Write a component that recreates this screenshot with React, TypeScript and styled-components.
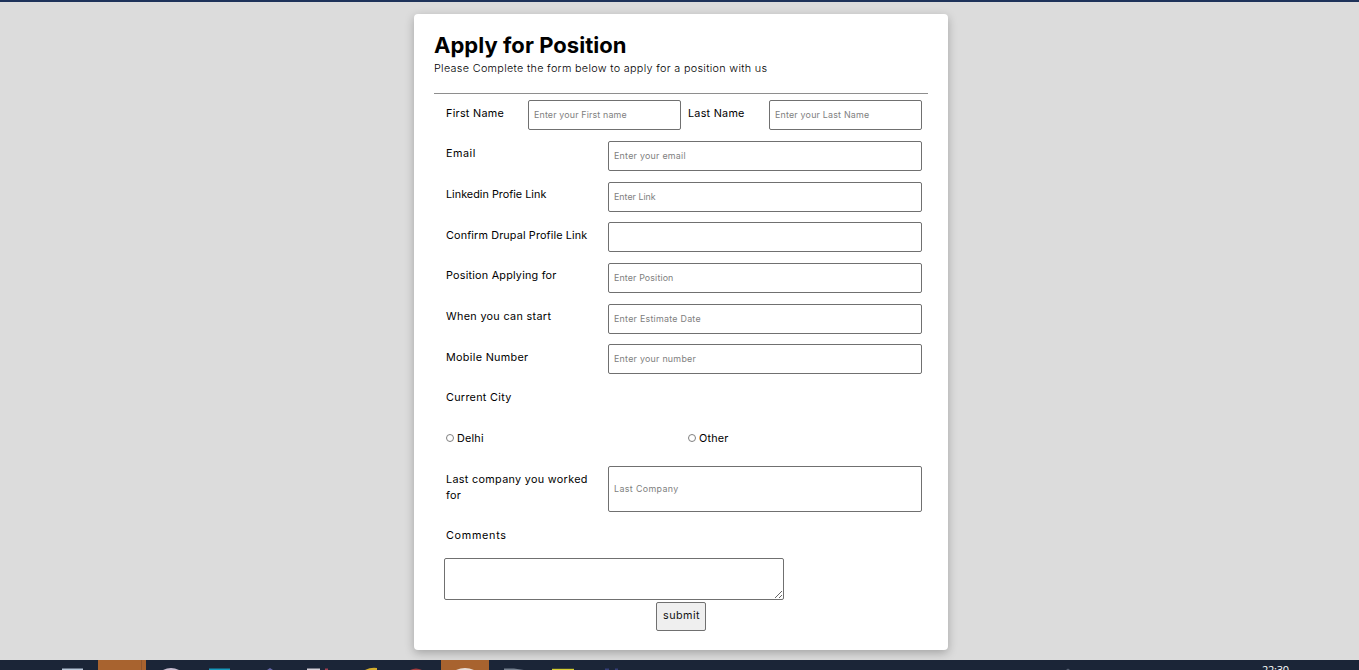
import React from 'react';
import styled, { createGlobalStyle } from 'styled-components';

const GlobalStyle = createGlobalStyle`
  * { box-sizing: border-box; }
  body { margin: 0; overflow: hidden; background: #dcdcdc; font-family: Inter, "Open Sans", sans-serif; }
  input, textarea, button { font-family: inherit; margin: 0; }
`;

const Page = styled.div`
  height: 670px;
  display: flex;
  flex-direction: column;
  align-items: center;
  overflow: hidden;
`;

const TopBar = styled.div`
  width: 100%;
  flex: 0 0 2px;
  background: #1e335a;
`;

const Main = styled.main`
  flex: 1;
  width: 100%;
  min-height: 0;
  padding: 12px 0 10px 414px;
`;

const Card = styled.form`
  width: 534px;
  height: 636px;
  padding: 20px;
  border-radius: 4px;
  background: #fff;
  box-shadow: 0 3px 10px rgba(0, 0, 0, 0.26);
`;

const Header = styled.header`
  height: 60px;
  border-bottom: 1px solid #8e8e8e;
`;

const Title = styled.h1`
  margin: 0;
  font-size: 22px;
  line-height: 22px;
  font-weight: 700;
  letter-spacing: 0.04px;
  white-space: nowrap;
`;

const Subtitle = styled.p`
  margin: 5px 0 0;
  font-size: 10.8px;
  line-height: 16px;
  font-weight: 300;
  letter-spacing: 0.32px;
  white-space: nowrap;
`;

const Fields = styled.div`
  padding: 6.3px 6px 0 12px;
`;

const Row = styled.div<{ $height?: number; $columns?: string }>`
  display: grid;
  grid-template-columns: ${(p) => p.$columns ?? '162px 314px'};
  align-items: start;
  height: ${(p) => p.$height ?? 40.67}px;
`;

const Label = styled.label<{ $spacing?: number }>`
  padding: 5.4px 12px 0 0;
  font-size: 10.8px;
  line-height: 16px;
  letter-spacing: ${(p) => p.$spacing ?? 0.1}px;
  color: #000;
`;

const Input = styled.input<{ $height?: number; $spacing?: number }>`
  width: 100%;
  min-width: 0;
  height: ${(p) => p.$height ?? 30}px;
  padding: 0 5px 1px;
  border: 1px solid #707070;
  border-radius: 2px;
  background: #fff;
  font-size: 8.9px;
  letter-spacing: ${(p) => p.$spacing ?? 0}px;
  &::placeholder { color: #808080; opacity: 1; }
`;

const Option = styled.label`
  display: flex;
  align-items: flex-start;
  gap: 3px;
  padding-top: 5.4px;
  font-size: 10.8px;
  line-height: 16px;
  letter-spacing: 0.2px;
`;

const Radio = styled.input`
  appearance: none;
  width: 8px;
  height: 8px;
  && { margin-top: 3px; }
  border: 1px solid #808080;
  border-radius: 50%;
  background: #fff;
`;

const Comments = styled.textarea`
  display: block;
  width: 340px;
  height: 42px;
  margin-left: 10px;
  border: 1px solid #707070;
  border-radius: 2px;
  background: #fff;
  resize: both;
`;

const Submit = styled.button`
  display: block;
  width: 50px;
  height: 29px;
  margin: 2px 0 0 222px !important;
  padding: 0 0 2px 1px;
  border: 1px solid #707070;
  border-radius: 2px;
  background: #efefef;
  font-size: 10.8px;
  letter-spacing: 0.45px;
  color: #111;
`;

const Taskbar = styled.footer`
  width: 100%;
  flex: 0 0 10px;
  overflow: hidden;
  background: #1b2537;
`;

interface Field {
  label: string;
  labelSpacing: number;
  placeholder: string;
  spacing: number;
}

const fields: Field[] = [
  { label: 'Email', labelSpacing: 0.5, placeholder: 'Enter your email', spacing: 0.25 },
  { label: 'Linkedin Profie Link', labelSpacing: 0.02, placeholder: 'Enter Link', spacing: 0 },
  { label: 'Confirm Drupal Profile Link', labelSpacing: 0.14, placeholder: '', spacing: 0 },
  { label: 'Position Applying for', labelSpacing: 0.22, placeholder: 'Enter Position', spacing: 0.12 },
  { label: 'When you can start', labelSpacing: 0.33, placeholder: 'Enter Estimate Date', spacing: 0.25 },
  { label: 'Mobile Number', labelSpacing: 0.32, placeholder: 'Enter your number', spacing: 0.25 },
];

const TaskIcons = () => (
  <svg width="1359" height="10" viewBox="0 0 1359 10" display="block">
    <path fill="#a8632f" d="M98 0h48v10H98zM441 0h48v10h-48z" />
    <path fill="#8e562e" d="M141 0h1v10h-1z" />
    <path fill="#b9c7d8" d="M62 8.5h21V10H62z" />
    <path fill="#c9bdd0" d="M163 10q8-4 16 0z" />
    <path fill="#1699bd" d="M209 8.5h21V10h-21z" />
    <path fill="#6668a8" d="M267 10l3-2 3 2z" />
    <path fill="#d6d1d9" d="M307 8.5h13V10h-13z" />
    <path fill="#a23f50" d="M325 8.5h3V10h-3z" />
    <path fill="#d4ae2e" d="M365 10q6-3 12-2v2z" />
    <path fill="#a23b3d" d="M410 10q6-3 12 0z" />
    <path fill="#e8dcd5" d="M456 10q9-4 18 0z" />
    <path fill="#778190" d="M504 8.5h10l10 1.5h-20z" />
    <path fill="#d6ce31" d="M552 8.8h22V10h-22z" />
    <path fill="#353e78" d="M605 8.5h4V10h-4zM615 8.5h3V10h-3z" />
    <path fill="#566071" d="M1066 10l2-1.5 2 1.5z" />
    <text x="1262" y="14" fill="#fff" fontFamily="Open Sans, sans-serif" fontSize="11" textLength="27">22:30</text>
  </svg>
);

export default function App() {
  return (
    <Page>
      <GlobalStyle />
      <TopBar />
      <Main>
        <Card onSubmit={(e) => e.preventDefault()}>
          <Header>
            <Title>Apply for Position</Title>
            <Subtitle>Please Complete the form below to apply for a position with us</Subtitle>
          </Header>
          <Fields>
            <Row $columns="82px 153px 7px 81px 153px">
              <Label $spacing={0.28}>First Name</Label>
              <Input $spacing={0.15} placeholder="Enter your First name" />
              <span />
              <Label $spacing={0.25}>Last Name</Label>
              <Input $spacing={0.2} placeholder="Enter your Last Name" />
            </Row>
            {fields.map((f) => (
              <Row key={f.label}>
                <Label $spacing={f.labelSpacing}>{f.label}</Label>
                <Input $spacing={f.spacing} placeholder={f.placeholder} />
              </Row>
            ))}
            <Row><Label $spacing={0.3}>Current City</Label></Row>
            <Row $columns="242px 1fr">
              <Option><Radio type="radio" name="city" />Delhi</Option>
              <Option><Radio type="radio" name="city" />Other</Option>
            </Row>
            <Row $height={56.67}>
              <Label $spacing={0.32}>Last company you worked for</Label>
              <Input $height={46} $spacing={0.37} placeholder="Last Company" />
            </Row>
            <Row $height={35.1}><Label $spacing={0.7}>Comments</Label></Row>
          </Fields>
          <Comments />
          <Submit type="submit">submit</Submit>
        </Card>
      </Main>
      <Taskbar><TaskIcons /></Taskbar>
    </Page>
  );
}
